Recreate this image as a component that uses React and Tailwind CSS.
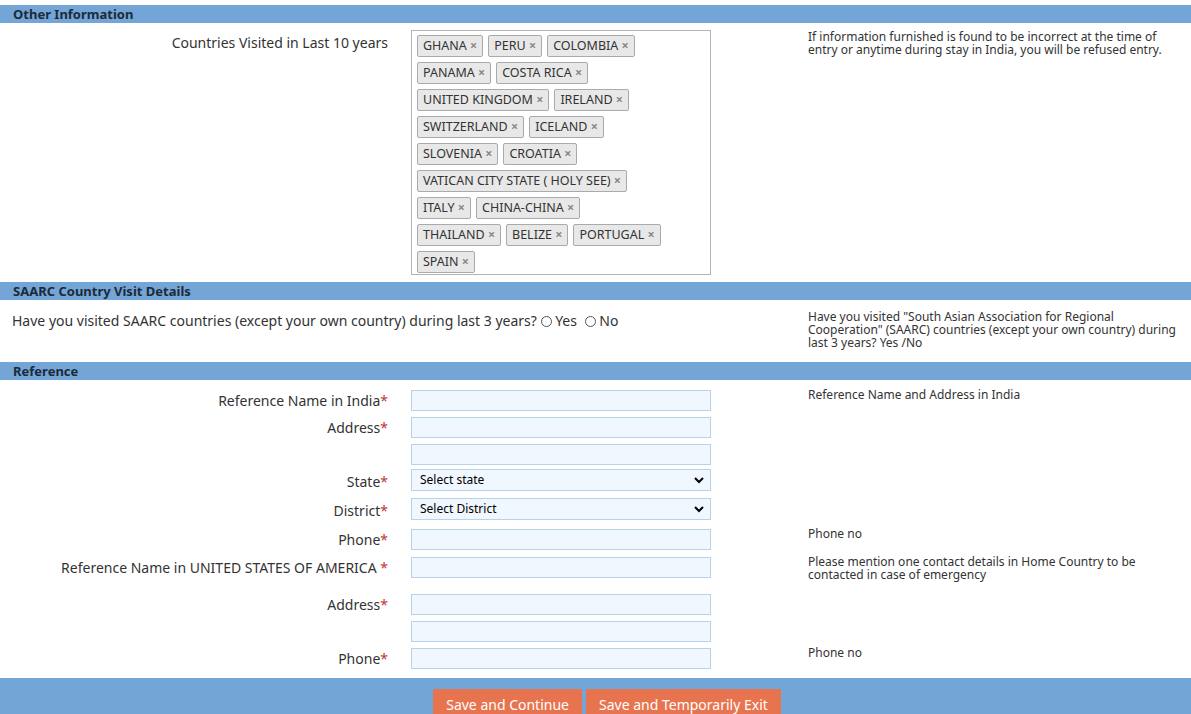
const countries = [
  ['GHANA', 'PERU', 'COLOMBIA'],
  ['PANAMA', 'COSTA RICA'],
  ['UNITED KINGDOM', 'IRELAND'],
  ['SWITZERLAND', 'ICELAND'],
  ['SLOVENIA', 'CROATIA'],
  ['VATICAN CITY STATE ( HOLY SEE)'],
  ['ITALY', 'CHINA-CHINA'],
  ['THAILAND', 'BELIZE', 'PORTUGAL'],
  ['SPAIN'],
];

function Bar({ children }) {
  return (
    <div className="h-[18px] bg-[#73a6d6] px-[13px] text-[13px] font-bold leading-[18px] text-[#1d2a3a]">
      {children}
    </div>
  );
}

function Label({ children, star = true }) {
  return (
    <div className="w-[388px] shrink-0 pt-[2px] text-right text-[14px] text-[#333]">
      {children}
      {star && <span className="text-[#c0392b]">*</span>}
    </div>
  );
}

function Field() {
  return <input className="h-[21px] w-[300px] border border-[#b7d3ec] bg-[#f0f7fe]" />;
}

function Select({ text }) {
  return (
    <div className="flex h-[22px] w-[300px] items-center justify-between border border-[#b7d3ec] bg-[#f0f7fe] pl-[8px] pr-[6px] font-['Liberation_Sans',sans-serif] text-[12px] text-black">
      <span>{text}</span>
      <svg width="10" height="7" viewBox="0 0 10 7"><path d="M1 1l4 4 4-4" stroke="#000" strokeWidth="2" fill="none" /></svg>
    </div>
  );
}

function Row({ label, star, children, help, h = 'h-[27px]' }) {
  return (
    <div className={`flex ${h}`}>
      <Label star={star}>{label}</Label>
      <div className="ml-[23px] w-[300px] shrink-0">{children}</div>
      <div className="ml-[97px] w-[370px] text-[12px] leading-[13px] text-[#333]">{help}</div>
    </div>
  );
}

export default function App() {
  return (
    <div className="h-[714px] w-[1191px] bg-white pt-[5px] font-['DejaVu_Sans',Verdana,sans-serif] text-[#333]">
      <Bar>Other Information</Bar>
      <div className="flex h-[259px] pt-[7px]">
        <div className="w-[388px] shrink-0 pt-[2px] text-right text-[14px]">Countries Visited in Last 10 years</div>
        <div className="ml-[23px] h-[245px] w-[300px] shrink-0 border border-[#b4b4b4] px-[5px] pt-[4px]">
          {countries.map((r, i) => (
            <div key={i} className="mb-[5px] flex gap-[5px]">
              {r.map((c) => (
                <span key={c} className="h-[22px] rounded-[2px] border border-[#aaa] bg-[#e8e8e8] px-[5px] text-[12.5px] leading-[20px] text-[#333]">
                  {c} <span className="font-bold text-[#888]">×</span>
                </span>
              ))}
            </div>
          ))}
        </div>
        <div className="ml-[97px] w-[370px] text-[12px] leading-[13px]">
          If information furnished is found to be incorrect at the time of entry or anytime during stay in India, you will be refused entry.
        </div>
      </div>
      <Bar>SAARC Country Visit Details</Bar>
      <div className="flex h-[62px] pt-[10px]">
        <div className="w-[796px] shrink-0 pl-[12px] text-[14px]">
          Have you visited SAARC countries (except your own country) during last 3 years?{' '}
          <span className="inline-block h-[11px] w-[11px] rounded-full border border-[#555] align-[-1px]" /> Yes{' '}
          <span className="ml-[4px] inline-block h-[11px] w-[11px] rounded-full border border-[#555] align-[-1px]" /> No
        </div>
        <div className="ml-[12px] w-[370px] text-[12px] leading-[13px]">
          Have you visited "South Asian Association for Regional Cooperation" (SAARC) countries (except your own country) during last 3 years? Yes /No
        </div>
      </div>
      <Bar>Reference</Bar>
      <div className="pt-[8px]">
        <Row label="Reference Name in India" help="Reference Name and Address in India"><Field /></Row>
        <Row label="Address"><Field /></Row>
        <Row label="" star={false}><Field /></Row>
        <Row label="State" h="h-[29px]"><Select text="Select state" /></Row>
        <Row label="District" h="h-[29px]"><Select text="Select District" /></Row>
        <Row label="Phone" help="Phone no" h="h-[28px]"><Field /></Row>
        <Row label="Reference Name in UNITED STATES OF AMERICA " help="Please mention one contact details in Home Country to be contacted in case of emergency" h="h-[37px]"><Field /></Row>
        <Row label="Address"><Field /></Row>
        <Row label="" star={false}><Field /></Row>
        <Row label="Phone" help="Phone no" h="h-[26px]"><Field /></Row>
      </div>
      <div className="mt-[6px] flex h-[42px] justify-center gap-[4px] bg-[#73a6d6] pl-[23px] pt-[11px]">
        <button className="h-[31px] rounded-[2px] bg-[#e8744f] px-[13px] font-['Liberation_Sans',sans-serif] text-[14px] text-white">Save and Continue</button>
        <button className="h-[31px] rounded-[2px] bg-[#e8744f] px-[13px] font-['Liberation_Sans',sans-serif] text-[14px] text-white">Save and Temporarily Exit</button>
      </div>
    </div>
  );
}
